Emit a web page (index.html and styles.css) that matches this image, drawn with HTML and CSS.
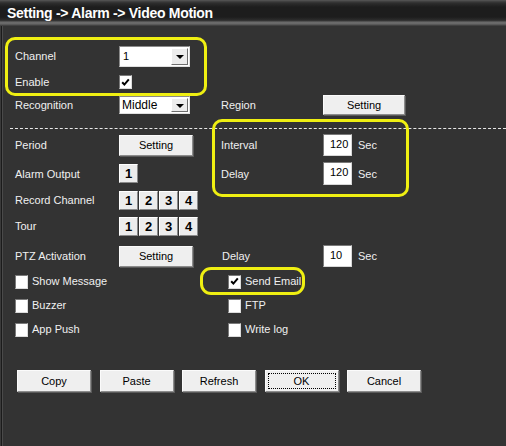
FILE: index.html
```html
<!DOCTYPE html>
<html>
<head>
<meta charset="utf-8">
<link rel="stylesheet" href="styles.css">
</head>
<body>
<div class="window">
  <div class="titlebar"><span class="title">Setting -&gt; Alarm -&gt; Video Motion</span></div>
  <div class="content">
    <div class="row r1">
      <span class="lbl">Channel</span>
      <div class="select wide"><span class="sel-text">1</span><span class="sel-btn"><i class="tri"></i></span></div>
    </div>
    <div class="row r2">
      <span class="lbl">Enable</span>
      <span class="cb"><svg viewBox="0 0 11 11" width="11" height="11"><path d="M2.2 5.2 L4.4 7.6 L8.8 2.4" fill="none" stroke="#000" stroke-width="2"/></svg></span>
    </div>
    <div class="row r3">
      <span class="lbl">Recognition</span>
      <div class="select short"><span class="sel-text">Middle</span><span class="sel-btn"><i class="tri"></i></span></div>
      <span class="lbl">Region</span>
      <button class="btn region">Setting</button>
    </div>
    <div class="sep"></div>
    <div class="row r4">
      <span class="lbl">Period</span>
      <button class="btn small">Setting</button>
      <span class="lbl">Interval</span>
      <div class="unit"><span class="num">120</span><span class="lbl sec">Sec</span></div>
    </div>
    <div class="row r5">
      <span class="lbl">Alarm Output</span>
      <div class="boxes"><span class="nb">1</span></div>
      <span class="lbl">Delay</span>
      <div class="unit"><span class="num tall">120</span><span class="lbl sec">Sec</span></div>
    </div>
    <div class="row r6">
      <span class="lbl">Record Channel</span>
      <div class="boxes"><span class="nb">1</span><span class="nb">2</span><span class="nb">3</span><span class="nb">4</span></div>
    </div>
    <div class="row r7">
      <span class="lbl">Tour</span>
      <div class="boxes"><span class="nb">1</span><span class="nb">2</span><span class="nb">3</span><span class="nb">4</span></div>
    </div>
    <div class="row r8">
      <span class="lbl">PTZ Activation</span>
      <button class="btn small">Setting</button>
      <span class="lbl d2">Delay</span>
      <div class="unit"><span class="num">10</span><span class="lbl sec">Sec</span></div>
    </div>
    <div class="row r9">
      <label class="chk span2"><span class="cb"></span>Show Message</label>
      <label class="chk right"><span class="cb"><svg viewBox="0 0 11 11" width="11" height="11"><path d="M2.2 5.2 L4.4 7.6 L8.8 2.4" fill="none" stroke="#000" stroke-width="2"/></svg></span>Send Email</label>
    </div>
    <div class="row r9">
      <label class="chk span2"><span class="cb"></span>Buzzer</label>
      <label class="chk right"><span class="cb"></span>FTP</label>
    </div>
    <div class="row r9">
      <label class="chk span2"><span class="cb"></span>App Push</label>
      <label class="chk right"><span class="cb"></span>Write log</label>
    </div>
    <div class="actions">
      <button class="btn act">Copy</button>
      <button class="btn act">Paste</button>
      <button class="btn act">Refresh</button>
      <button class="btn act ok"><span class="focus">OK</span></button>
      <button class="btn act">Cancel</button>
    </div>
  </div>
  <div class="mark m1"></div>
  <div class="mark m2"></div>
  <div class="mark m3"></div>
</div>
</body>
</html>
```
FILE: styles.css
```css
* { box-sizing: border-box; }
html, body { margin: 0; padding: 0; }
body {
  width: 506px;
  height: 446px;
  overflow: hidden;
  background: #333333;
  font-family: "Liberation Sans", Arial, sans-serif;
  font-size: 11px;
  color: #f0f0f0;
}
.window {
  position: relative;
  width: 506px;
  height: 446px;
}
.titlebar {
  height: 26px;
  background: linear-gradient(#5a5a5a 0px, #464646 1px, #2e2e2e 3px, #1d1d1d 7px, #1d1d1d 17px, #2c2c2c 20px, #3a3a3a 21px, #6b6b6b 22px, #686868 24px, #4a4a4a 25px, #3a3a3a 26px);
  padding: 5px 0 0 7px;
}
.title {
  display: block;
  font-weight: bold;
  font-size: 14px;
  line-height: 17px;
  color: #ffffff;
  letter-spacing: -0.3px;
}
.content {
  height: 420px;
  padding: 19px 0 0 15px;
  box-shadow: inset 1px 0 0 #3a3a3a, inset 2px 0 0 #1b1b1b, inset 3px 0 0 #4a4a4a;
}
.row {
  display: grid;
  grid-template-columns: 104px 102px 102px auto;
  align-items: center;
}
.lbl { white-space: nowrap; }
.r1 { height: 22px; }
.r2 { height: 18px; margin-top: 6px; }
.r3 { height: 20px; margin-top: 4px; }
.sep {
  margin: 13px 0 0 -5px;
  height: 1px;
  border-top: 1px dashed #e8e8e8;
}
.r4 { height: 22px; margin-top: 5px; }
.r5 { height: 23px; margin-top: 6px; }
.r6 { height: 20px; margin-top: 5px; }
.r7 { height: 20px; margin-top: 6px; }
.r8 { height: 22px; margin-top: 9px; }
.r9 { height: 20px; margin-top: 4px; }
.r8 .d2 { padding-left: 1px; }

.select {
  width: 71px;
  background: #fff;
  border: 1px solid;
  border-color: #8a8a8a #e0e0e0 #e0e0e0 #8a8a8a;
  display: flex;
  align-items: center;
  justify-content: space-between;
  color: #000;
  padding: 1px;
}
.select.wide { height: 21px; }
.select.short { height: 18px; }
.sel-text { padding-left: 2px; font-size: 11px; }
.select.short .sel-text { font-size: 12px; padding-left: 1px; }
.sel-btn {
  width: 17px;
  height: 100%;
  background: #ececec;
  border: 1px solid;
  border-color: #ffffff #6e6e6e #6e6e6e #ffffff;
  display: flex;
  align-items: center;
  justify-content: center;
}
.tri {
  width: 0;
  height: 0;
  border-left: 4px solid transparent;
  border-right: 4px solid transparent;
  border-top: 4px solid #000;
  margin-top: 1px;
}
.cb {
  width: 13px;
  height: 14px;
  background: #fff;
  border: 1px solid;
  border-color: #7a7a7a #dcdcdc #dcdcdc #7a7a7a;
  display: inline-flex;
  align-items: center;
  justify-content: center;
}
.btn {
  font-family: "Liberation Sans", Arial, sans-serif;
  font-size: 11px;
  color: #000;
  background: #efefef;
  border: 1px solid;
  border-color: #fbfbfb #8c8c8c #8c8c8c #fbfbfb;
  box-shadow: 1px 1px 0 #5a5a5a;
  padding: 0;
  margin: 0;
}
.btn.region { width: 82px; height: 20px; }
.btn.small { width: 74px; height: 21px; }
.unit { display: flex; align-items: center; gap: 6px; }
.num {
  width: 29px;
  height: 22px;
  background: #fff;
  color: #000;
  border: 1px solid;
  border-color: #7a7a7a #d8d8d8 #d8d8d8 #7a7a7a;
  padding: 3px 0 0 6px;
  font-size: 11px;
}
.num.tall { height: 23px; }
.sec { padding-left: 0; }
.boxes { display: flex; gap: 1px; }
.nb {
  width: 19px;
  height: 19px;
  background: #ececec;
  color: #000;
  border: 1px solid;
  border-color: #ffffff #8a8a8a #8a8a8a #ffffff;
  font-size: 13px;
  font-weight: bold;
  display: flex;
  align-items: center;
  justify-content: center;
}
.chk { display: flex; align-items: center; gap: 4px; white-space: nowrap; }
.chk .cb { margin-top: 1px; }
.span2 { grid-column: 1 / 3; }
.right { grid-column: 3 / 5; padding-left: 7px; }

.actions {
  display: flex;
  gap: 8.5px;
  margin: 31px 0 0 2px;
}
.btn.act { width: 74px; height: 22px; font-size: 11px; }
.btn.ok { padding: 2px; display: flex; }
.focus {
  flex: 1;
  border: 1px dotted #000;
  display: flex;
  align-items: center;
  justify-content: center;
}

.mark {
  position: absolute;
  border: 3px solid #efef12;
  border-radius: 10px;
}
.m1 { left: 5px; top: 37px; width: 202px; height: 59px; }
.m2 { left: 212px; top: 119px; width: 197px; height: 78px; }
.m3 { left: 200px; top: 267px; width: 105px; height: 28px; border-radius: 11px; }
```
